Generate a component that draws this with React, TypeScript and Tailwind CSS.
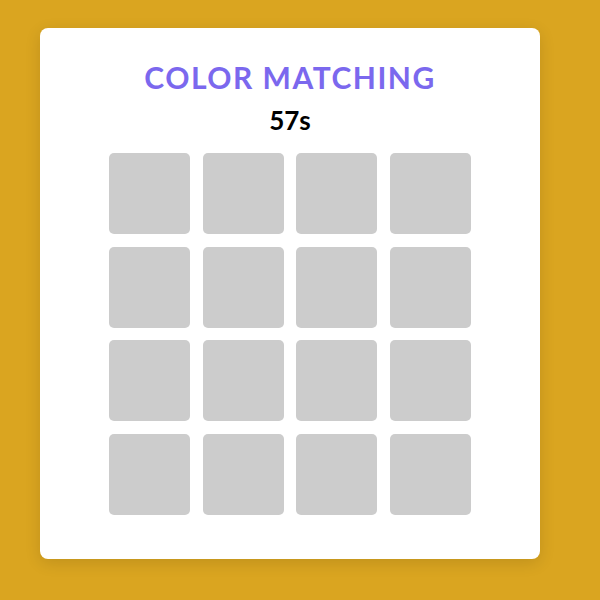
import React from 'react';

const TILES = Array.from({ length: 16 }, (_, i) => i);

export default function App() {
  return (
    <div className="min-h-[600px] w-full bg-[#daa520] pl-[40px] pt-[28px]">
      <div className="flex h-[531px] w-[500px] flex-col items-center rounded-lg bg-white shadow-[0_4px_16px_rgba(0,0,0,0.12)]">
        <h1
          className="mt-[34px] text-[30px] leading-[30px] font-bold tracking-[1.5px] text-[#7b68ee]"
          style={{ fontFamily: 'Lato, "Noto Sans", sans-serif' }}
        >
          COLOR MATCHING
        </h1>
        <div
          className="mt-[14px] text-[26px] leading-[28px] font-bold text-black"
          style={{ fontFamily: 'Lato, "Noto Sans", sans-serif' }}
        >
          57s
        </div>
        <div className="mt-[19px] grid w-[362px] grid-cols-4 gap-[12.67px]">
          {TILES.map((i) => (
            <div key={i} className="aspect-square rounded-[5px] bg-[#cccccc]" />
          ))}
        </div>
      </div>
    </div>
  );
}
